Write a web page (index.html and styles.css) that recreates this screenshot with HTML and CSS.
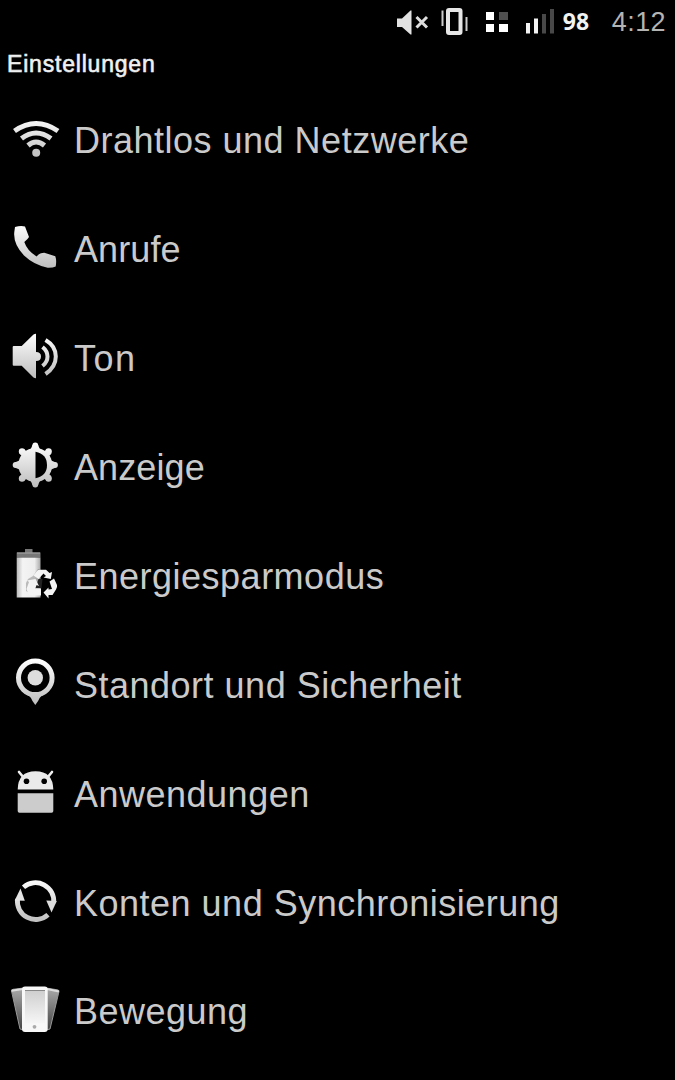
FILE: index.html
```html
<!DOCTYPE html>
<html lang="de">

<head>
    <meta charset="UTF-8">
    <title>Einstellungen</title>
    <link rel="stylesheet" href="styles.css">
</head>

<body>
<!-- shared gradients -->
<svg class="defs" width="0" height="0">
    <defs>
        <linearGradient id="silver" gradientUnits="userSpaceOnUse" x1="0" y1="6" x2="0" y2="52">
            <stop offset="0" stop-color="#fff"/>
            <stop offset="1" stop-color="#bcbcbc"/>
        </linearGradient>
        <linearGradient id="battery" x1="0" y1="0" x2="1" y2="0">
            <stop offset="0" stop-color="#bbb"/>
            <stop offset=".25" stop-color="#f4f4f4"/>
            <stop offset=".75" stop-color="#eee"/>
            <stop offset="1" stop-color="#aaa"/>
        </linearGradient>
        <linearGradient id="back" x1="0" y1="0" x2="0" y2="1">
            <stop offset="0" stop-color="#aaa"/>
            <stop offset="1" stop-color="#444"/>
        </linearGradient>
        <linearGradient id="screen" x1="0" y1="0" x2="0" y2="1">
            <stop offset="0" stop-color="#cfcfcf"/>
            <stop offset="1" stop-color="#f6f6f6"/>
        </linearGradient>
    </defs>
</svg>

<div class="status-bar">
    <div class="status-icons">
        <svg width="32" height="30" viewBox="0 0 32 30">
            <path d="M0 10.500h5l8.500-8h1v24h-1L5 19H0z" fill="#e2e2e2"/>
            <path d="M19.500 9l10.500 10.500m0-10.500l-10.500 10.500" stroke="#ddd" stroke-width="3"/>
        </svg>
        <svg width="27" height="30" viewBox="0 0 27 30">
            <rect x="7" y="2" width="12.500" height="23" rx="1" fill="none" stroke="#e6e6e6" stroke-width="4"/>
            <path d="M1.500 2.500v15.500M25.500 9v14" stroke="#ccc" stroke-width="2"/>
        </svg>
        <svg width="22" height="30" viewBox="0 0 22 30">
            <path d="M0 4h8v8H0zM0 16h8v8H0zM13 16h9v8h-9z" fill="#fff"/>
            <path d="M13 4h9v8h-9z" fill="#505050"/>
        </svg>
        <svg width="28" height="30" viewBox="0 0 28 30">
            <path d="M0 15h4v10.500H0zM8 10.500h4v15H8z" fill="#f2f2f2"/>
            <path d="M16 6h4v19.500h-4zM24 1h4v24.500h-4z" fill="#484848"/>
        </svg>
    </div>
    <span class="battery-level">98</span>
    <span class="clock">4:12</span>
</div>

<h1 class="title">Einstellungen</h1>

<ul class="settings">
    <li class="setting">
        <svg class="icon" viewBox="0 0 60 60">
            <g fill="none" stroke="url(#silver)" stroke-width="5">
                <path d="M9.500 22Q31 7 53 22"/>
                <path d="M16.500 29.500Q31 18.500 46 29.500"/>
                <path d="M23 36.500Q31 29.500 39.500 36.500"/>
            </g>
            <circle cx="31.200" cy="43.800" r="4" fill="#c4c4c4"/>
        </svg>
        <span class="label">Drahtlos und Netzwerke</span>
    </li>
    <li class="setting">
        <svg class="icon" viewBox="0 0 60 60">
            <path fill="url(#silver)" d="M10 9q5-1.500 10-.600L24 19q-1 2-4.700 5 3 9 12.400 14.400 3-3.700 7.600-3.700l11 3.500q1.500 4 .400 10.200-3 1.500-8 1.300Q29 47 19 37.500 8 26 9.300 14z"/>
        </svg>
        <span class="label tight">Anrufe</span>
    </li>
    <li class="setting">
        <svg class="icon" viewBox="0 0 60 60">
            <path fill="url(#silver)" d="M7.700 20q0-1 1-1h8L28.500 7.500q1-.800 2.500-.800V25q5 0 5 4.500t-5 4.500v17.300q-1.500 0-2.500-.800L16.700 38.700h-8q-1 0-1-1z"/>
            <g fill="none" stroke="url(#silver)" stroke-width="4">
                <path d="M37.500 20q5 4 5 9.500t-5 9.500"/>
                <path d="M40.500 13Q50.800 19 50.800 29.500T40.500 47"/>
            </g>
        </svg>
        <span class="label wide">Ton</span>
    </li>
    <li class="setting">
        <svg class="icon" viewBox="0 0 60 60">
            <g fill="url(#silver)">
                <circle cx="30.300" cy="29" r="17"/>
                <path d="M27.500 9h5.600l3 7h-11.600zM27.500 49h5.600l3-7h-11.600zM10.300 26.200v5.600l7 3v-11.600zM50.300 26.200v5.600l-7 3v-11.600z"/>
                <circle cx="30.300" cy="9.500" r="2.900"/>
                <circle cx="30.300" cy="48.500" r="2.900"/>
                <circle cx="10.600" cy="29" r="2.900"/>
                <circle cx="50" cy="29" r="2.900"/>
                <circle cx="17" cy="15.500" r="3.200"/>
                <circle cx="43.600" cy="15.500" r="3.200"/>
                <circle cx="17" cy="42.500" r="3.200"/>
                <circle cx="43.600" cy="42.500" r="3.200"/>
            </g>
            <path d="M17 15.500l27 27M44 15.500l-27 27" stroke="url(#silver)" stroke-width="6.400"/>
            <path d="M30.500 15.700Q42 18 42 29T30.500 42.300z" fill="#000"/>
        </svg>
        <span class="label tight">Anzeige</span>
    </li>
    <li class="setting">
        <svg class="icon" viewBox="0 0 60 60">
            <path d="M20 4h7.500v3.500H35.500v5H11.700v-5H20z" fill="#777"/>
            <path d="M12 8h23" stroke="#aaa" stroke-width="1"/>
            <path d="M11.700 12.500H35.500V52.500H11.700z" fill="url(#battery)"/>
            <path d="M28 31l5-7h3v20h-7l-3 5-5-3v-8l2-4z" fill="#555" opacity=".35"/>
            <path d="M33.500 34h4l-1 9H30.500z" fill="#222"/>
            <g fill="#f4f4f4">
                <path d="M28.500 30.500L32 26q1-1.200 3-1.200h6l3.500 3.200 2.500-1-1.200 7-7.300-1.500 2.500-1.500-2.500-2.500-5 5.500z"/>
                <path d="M44.500 36.500l4.500-3 3 6.500q.500 2-1 4.500l-3.500 5.500h-4v3.500l-5-6 5-5v2l3.500-.500z"/>
                <path d="M24 37l-2-1.500 8.500-1.500 3.500 7-2.500-1-1.500 3.500h6v7H26q-2 0-2.800-2L21.500 44z"/>
            </g>
        </svg>
        <span class="label">Energiesparmodus</span>
    </li>
    <li class="setting">
        <svg class="icon" viewBox="0 0 60 60">
            <path fill="url(#silver)" d="M18 38.500q8 3 9.500 8.500l2.800 4 2.800-4q1.500-5.500 9.500-8.500z"/>
            <circle cx="30.300" cy="23.800" r="16.800" fill="#000" stroke="url(#silver)" stroke-width="5"/>
            <circle cx="30.300" cy="23.800" r="7.700" fill="#ddd"/>
        </svg>
        <span class="label">Standort und Sicherheit</span>
    </li>
    <li class="setting">
        <svg class="icon" viewBox="0 0 60 60">
            <path d="M14 9l5 6M47 9l-5 6" stroke="#eee" stroke-width="2.600" stroke-linecap="round"/>
            <path d="M12.700 26.600Q13 8.300 30.500 8.300T48.300 26.600z" fill="#eaeaea"/>
            <circle cx="21.500" cy="18.300" r="2.800" fill="#000"/>
            <circle cx="39.200" cy="18.300" r="2.800" fill="#000"/>
            <path d="M12.700 30.300H48.300V48q0 1.700-1.700 1.700H14.400q-1.700 0-1.700-1.700z" fill="#ccc"/>
        </svg>
        <span class="label">Anwendungen</span>
    </li>
    <li class="setting">
        <svg class="icon" viewBox="0 0 60 60">
            <g fill="none" stroke="url(#silver)" stroke-width="4.800">
                <path d="M18.500 15.200A18.300 18.300 0 0 1 48.700 31"/>
                <path d="M43 42.700A18.300 18.300 0 0 1 12.500 27"/>
            </g>
            <path d="M41.300 28.500l10.500.500-5.300 11.500z" fill="#ddd"/>
            <path d="M19.800 28.800L9.700 28.500 15.500 16.500z" fill="#e4e4e4"/>
        </svg>
        <span class="label">Konten und Synchronisierung</span>
    </li>
    <li class="setting">
        <svg class="icon" viewBox="0 0 60 60">
            <g fill="url(#back)" stroke="#999" stroke-width="1">
                <path d="M6.500 11q0-1.500 1.500-1.700L19 8v42l-4-1z"/>
                <path d="M54 11.500q0-1.500-1.500-1.700L41 8v42l4-1z"/>
            </g>
            <path d="M6.500 10.700L18 9M54 11.500L42 9" stroke="#ddd" stroke-width="2"/>
            <rect x="17" y="6.500" width="25.700" height="45.500" rx="3" fill="#f8f8f8"/>
            <rect x="20" y="10.500" width="20" height="33" fill="url(#screen)"/>
            <path d="M20 10.500h20" stroke="#888" stroke-width="1"/>
            <circle cx="29.500" cy="46.800" r="1.900" fill="#aaa"/>
        </svg>
        <span class="label">Bewegung</span>
    </li>
</ul>
</body>

</html>
```
FILE: styles.css
```css
body {
    margin: 0;
    height: 1080px;
    overflow: hidden;
    background: #000;
    color: #cacaca;
    font-family: "Liberation Sans", Arial, sans-serif;
}

.defs {
    display: block;
}

.status-bar {
    display: flex;
    align-items: center;
    justify-content: flex-end;
    height: 43px;
    padding-right: 9px;
}

.status-icons {
    display: flex;
    gap: 18px;
    width: 157px;
    margin-right: 9px;
    padding-top: 2px;
}

.status-icons svg {
    flex: none;
}

.status-icons svg:nth-child(2) {
    margin-left: -6px;
}

.battery-level {
    width: 27px;
    margin-right: 22px;
    padding-bottom: 2px;
    color: #f2f2f2;
    font: bold 23px "Noto Sans", sans-serif;
}

.clock {
    padding-top: 2px;
    color: #b4b4b4;
    font-size: 27px;
    letter-spacing: 0.4px;
}

.title {
    height: 42px;
    margin: 0;
    padding-left: 7px;
    color: #f0f0f0;
    font-size: 23px;
    font-weight: normal;
    line-height: 43px;
    letter-spacing: 0.8px;
    -webkit-text-stroke: 0.6px #f0f0f0;
}

.settings {
    margin: 0;
    padding: 0;
    list-style: none;
}

.setting {
    display: flex;
    align-items: center;
    gap: 9px;
    height: 108.875px;
    padding-left: 5px;
    font-size: 36px;
}

.icon {
    flex: none;
    width: 60px;
    height: 60px;
}

.label {
    padding-top: 4px;
    letter-spacing: 0.5px;
}

.label.tight {
    letter-spacing: 0.1px;
}

.label.wide {
    letter-spacing: 1.5px;
}
```
